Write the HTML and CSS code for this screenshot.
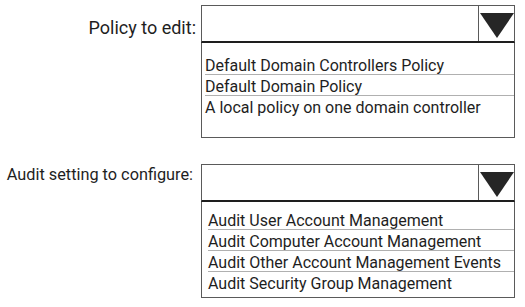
FILE: index.html
```html
<!DOCTYPE html>
<html>
<head>
<meta charset="utf-8">
<link rel="stylesheet" href="styles.css">
</head>
<body>
<div class="form">
  <div class="row row-policy">
    <div class="label">Policy to edit:</div>
    <div class="select">
      <div class="head">
        <div class="value"></div>
        <div class="btn"><svg width="34" height="25" viewBox="0 0 34 25"><polygon points="0,0 34,0 17,25" fill="#262626"/></svg></div>
      </div>
      <ul class="list list-policy">
        <li>Default Domain Controllers Policy</li>
        <li>Default Domain Policy</li>
        <li>A local policy on one domain controller</li>
      </ul>
    </div>
  </div>
  <div class="row row-audit">
    <div class="label">Audit setting to configure:</div>
    <div class="select">
      <div class="head">
        <div class="value"></div>
        <div class="btn"><svg width="34" height="25" viewBox="0 0 34 25"><polygon points="0,0 34,0 17,25" fill="#262626"/></svg></div>
      </div>
      <ul class="list list-audit">
        <li>Audit User Account Management</li>
        <li>Audit Computer Account Management</li>
        <li>Audit Other Account Management Events</li>
        <li>Audit Security Group Management</li>
      </ul>
    </div>
  </div>
</div>
</body>
</html>
```

FILE: styles.css
```css
html, body {
  margin: 0;
  padding: 0;
  background: #ffffff;
}
body {
  font-family: Roboto, "Liberation Sans", sans-serif;
  color: #1e1e1e;
  width: 525px;
  height: 307px;
  overflow: hidden;
}
.form {
  padding-top: 5px;
  display: flex;
  flex-direction: column;
  gap: 26px;
}
.row {
  display: grid;
  grid-template-columns: 201px 314px;
}
.label {
  font-size: 18px;
  text-align: right;
  white-space: nowrap;
  padding-right: 5px;
  padding-top: 13px;
  line-height: 20px;
}
.row-audit .label {
  font-size: 16.3px;
  padding-right: 8px;
  padding-top: 1px;
}
.head {
  display: flex;
  height: 35px;
  border: 1px solid #5a5a5a;
  border-bottom: 2px solid #1e1e1e;
}
.value {
  flex: 1;
}
.btn {
  width: 36px;
  border-left: 1px solid #5a5a5a;
  display: flex;
  justify-content: center;
  padding-top: 7px;
  box-sizing: border-box;
}
.list {
  list-style: none;
  margin: 0;
  border: 1px solid #5a5a5a;
  border-top: none;
  font-size: 16px;
}
.list li {
  height: 20px;
  line-height: 23px;
}
.list li + li {
  border-top: 1px solid #b0b0b0;
}
.list-policy {
  padding: 11px 0 21px 3px;
}
.list-audit {
  padding: 7px 0 5px 6px;
}
```
